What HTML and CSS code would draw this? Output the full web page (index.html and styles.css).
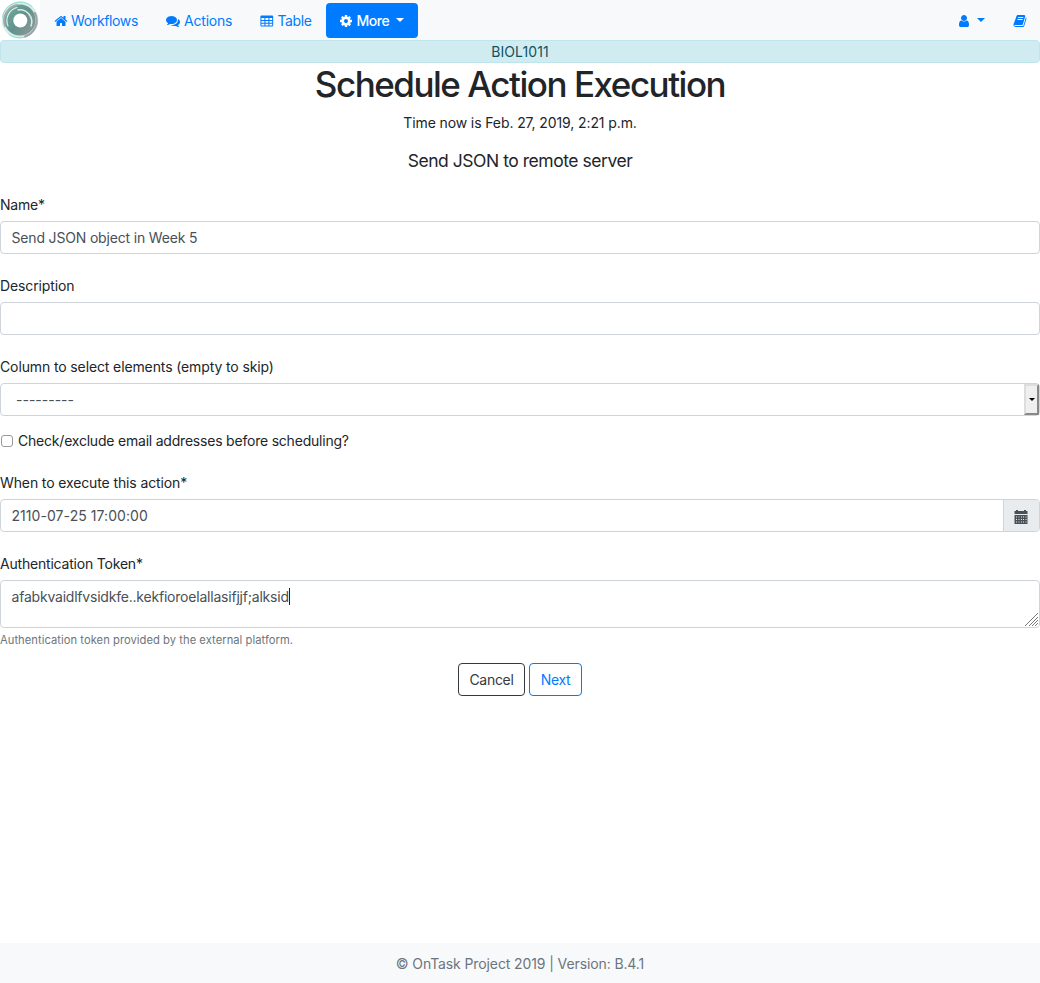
FILE: index.html
```html
<!DOCTYPE html>
<html lang="en">
<head>
<meta charset="utf-8">
<title>Schedule Action Execution</title>
<link rel="stylesheet" href="styles.css">
</head>
<body>
<nav class="navbar">
  <a class="brand">
    <svg width="40" height="40" viewBox="0 0 40 40">
      <defs>
        <linearGradient id="ring" x1="0" y1="0.1" x2="1" y2="0.9">
          <stop offset="0" stop-color="#6fae9f"/><stop offset=".5" stop-color="#62928c"/><stop offset="1" stop-color="#929a9b"/>
        </linearGradient>
      </defs>
      <rect width="40" height="40" fill="#fff"/>
      <circle cx="20" cy="20" r="18.400" fill="#d3efe9"/>
      <circle cx="20" cy="20" r="15.600" fill="url(#ring)"/>
      <g fill="none" stroke-linecap="round">
        <path d="M2.500 17A18 18 0 0 1 32 6.500" stroke="#8fdccb" stroke-width="1"/>
        <path d="M37.500 22A18 18 0 0 1 9 34.500" stroke="#83e3cd" stroke-width="1"/>
        <path d="M35 13A17 17 0 0 1 25 36.500" stroke="#a0a5a7" stroke-width="2"/>
        <path d="M5 26A16 16 0 0 1 17 5" stroke="#a3aaab" stroke-width="2"/>
        <path d="M8 26A13.500 13.500 0 0 1 17 7.500" stroke="#e0f0ec" stroke-width="1.200"/>
        <path d="M18 10A12 12 0 0 1 31 26" stroke="#d9eae7" stroke-width="1.500"/>
      </g>
      <circle cx="20.300" cy="20.500" r="7" fill="#fff"/>
    </svg>
  </a>
  <a class="nav-link workflows"><svg class="icon" viewBox="0 0 1792 1792"><path d="M1472 992v480q0 26-19 45t-45 19h-384v-384h-256v384h-384q-26 0-45-19t-19-45v-480q0-1 .5-3t.5-3l575-474 575 474q1 2 1 6zm223-69l-62 74q-8 9-21 11h-3q-13 0-21-7l-692-577-692 577q-12 8-24 7-13-2-21-11l-62-74q-8-10-7-23.5t11-21.5l719-599q32-26 76-26t76 26l244 204v-195q0-14 9-23t23-9h192q14 0 23 9t9 23v408l219 182q10 8 11 21.5t-7 23.5z"/></svg><span>Workflows</span></a>
  <a class="nav-link actions"><svg class="icon" viewBox="0 0 1792 1792"><path d="M1408 768q0 139-94 257t-256.5 186.5-353.5 68.5q-86 0-176-16-124 88-278 128-36 9-86 16h-3q-11 0-20.5-8t-11.5-21q-1-3-1-6.5t.5-6.5 2-6l2.5-5 3.5-5.500 4-5 4.500-5 4-4.500q5-6 23-25t26-29.500 22.500-29 25-38.500 20.500-44q-124-72-195-177t-71-224q0-139 94-257t256.500-186.500 353.500-68.500 353.500 68.500 256.500 186.500 94 257zm384 256q0 120-71 224.500t-195 176.500q10 24 20.500 44t25 38.500 22.500 29 26 29.500 23 25q1 1 4 4.500t4.500 5 4 5 3.500 5.500l2.500 5 2 6 .5 6.500-1 6.500q-3 14-13 22t-22 7q-50-7-86-16-154-40-278-128-90 16-176 16-271 0-472-132 58 4 88 4 161 0 309-45t264-129q125-92 192-212t67-254q0-77-23-152 129 71 204 178t75 230z"/></svg><span>Actions</span></a>
  <a class="nav-link table"><svg class="icon" viewBox="0 0 14 14"><path fill-rule="evenodd" d="M1.600 1.500H12A1.200 1.200 0 0 1 13.200 2.700V11.300A1.200 1.200 0 0 1 12 12.500H1.600A1.200 1.200 0 0 1 .4 11.300V2.700A1.200 1.200 0 0 1 1.600 1.500ZM1.400 4V6H4.400V4ZM5.400 4V6H8.400V4ZM9.400 4V6H12.200V4ZM1.400 7V8.800H4.400V7ZM5.400 7V8.800H8.400V7ZM9.400 7V8.800H12.200V7ZM1.400 9.800V11.600H4.400V9.800ZM5.400 9.800V11.600H8.400V9.800ZM9.400 9.800V11.600H12.200V9.800Z"/></svg><span>Table</span></a>
  <a class="nav-link more"><svg class="icon" viewBox="0 0 1792 1792"><path d="M1152 896q0-106-75-181t-181-75-181 75-75 181 75 181 181 75 181-75 75-181zm512-109v222q0 12-8 23t-20 13l-185 28q-19 54-39 91 35 50 107 138 10 12 10 25t-9 23q-27 37-99 108t-94 71q-12 0-26-9l-138-108q-44 23-91 38-16 136-29 186-7 28-36 28h-222q-14 0-24.5-8.5t-11.5-21.5l-28-184q-49-16-90-37l-141 107q-10 9-25 9-14 0-25-11-126-114-165-168-7-10-7-23 0-12 8-23 15-21 51-66.5t54-70.5q-27-50-41-99l-183-27q-13-2-21-12.5t-8-23.5v-222q0-12 8-23t19-13l186-28q14-46 39-92-40-57-107-138-10-12-10-24 0-10 9-23 26-36 98.5-107.5t94.5-71.5q13 0 26 10l138 107q44-23 91-38 16-136 29-186 7-28 36-28h222q14 0 24.5 8.5t11.5 21.5l28 184q49 16 90 37l142-107q9-9 24-9 13 0 25 10 129 119 165 170 7 8 7 22 0 12-8 23-15 21-51 66.5t-54 70.5q26 50 41 98l183 28q13 2 21 12.5t8 23.5z"/></svg><span>More</span><i class="caret"></i></a>
  <div class="nav-right">
    <a class="nav-link"><svg class="icon" viewBox="0 0 1792 1792"><path d="M1536 1399q0 109-62.5 187t-150.5 78h-854q-88 0-150.5-78t-62.500-187q0-85 8.500-160.500t31.500-152 58.500-131 94-89 134.500-34.500q131 128 313 128t313-128q76 0 134.500 34.500t94 89 58.500 131 31.500 152 8.500 160.500zm-256-887q0 159-112.500 271.500t-271.500 112.500-271.500-112.500-112.500-271.500 112.500-271.500 271.500-112.500 271.500 112.500 112.500 271.500z"/></svg><i class="caret"></i></a>
    <a class="nav-link"><svg class="icon" viewBox="0 0 1792 1792"><path d="M1703 478q40 57 18 129l-275 906q-19 64-76.5 107.5t-122.5 43.5h-923q-77 0-148.5-53.5t-99.5-131.5q-24-67-2-127 0-4 3-27t4-37q1-8-3-21.5t-3-19.5q2-11 8-21t16.5-23.5 16.5-23.5q23-38 45-91.5t30-91.5q3-10 .5-30t-.5-28q3-11 17-28t17-23q21-36 42-92t25-90q1-9-2.5-32t.5-28q4-13 22-30.5t22-22.5q19-26 42.5-84.5t27.5-96.5q1-8-3-25.5t-2-26.5q2-8 9-18t18-23 17-21q8-12 16.5-30.5t15-35 16-36 19.5-32 26.5-23.5 36-11.5 47.5 5.5l-1 3q38-9 51-9h761q74 0 114 56t18 130l-274 906q-36 119-71.5 153.5t-128.5 34.5h-869q-27 0-38 15-11 16-1 43 24 70 144 70h923q29 0 56-15.5t35-41.5l300-987q7-22 5-57 38 15 59 43zm-1064 2q-4 13 2 22.5t20 9.5h608q13 0 25.5-9.5t16.5-22.5l21-64q4-13-2-22.5t-20-9.5h-608q-13 0-25.5 9.5t-16.5 22.5zm-83 256q-4 13 2 22.5t20 9.5h608q13 0 25.5-9.5t16.5-22.5l21-64q4-13-2-22.5t-20-9.5h-608q-13 0-25.5 9.5t-16.5 22.5z"/></svg></a>
  </div>
</nav>
<div class="workflow-name"><span>BIOL1011</span></div>
<main>
  <header class="heading">
    <h1>Schedule Action Execution</h1>
    <p class="now">Time now is Feb. 27, 2019, 2:21 p.m.</p>
    <p class="lead">Send JSON to remote server</p>
  </header>
  <form>
    <div class="group">
      <label class="l-name">Name*</label>
      <div class="control"><span class="v-name">Send JSON object in Week 5</span></div>
    </div>
    <div class="group">
      <label>Description</label>
      <div class="control"></div>
    </div>
    <div class="group select-group">
      <label class="l-column">Column to select elements (empty to skip)</label>
      <div class="control select"><span class="dashes">---------</span><b class="arrow"><i></i></b></div>
    </div>
    <div class="check"><span class="box"></span><span class="l-check">Check/exclude email addresses before scheduling?</span></div>
    <div class="group">
      <label class="l-when">When to execute this action*</label>
      <div class="control date"><span class="v-date">2110-07-25 17:00:00</span>
        <span class="addon"><svg width="14" height="14" viewBox="0 0 14 14" fill="#495057"><path d="M.5 1H2V0H4V1H10V0H12V1H13.500V4H.5Z"/><path fill-rule="evenodd" d="M.5 5H13.500V14H.5ZM2 6.500V7.500H3V6.500ZM4.500 6.500V7.500H5.500V6.500ZM7 6.500V7.500H8V6.500ZM9 6.500V7.500H10V6.500ZM11.500 6.500V7.500H12.500V6.500ZM2 9V10H3V9ZM4.500 9V10H5.500V9ZM7 9V10H8V9ZM9 9V10H10V9ZM11.500 9V10H12.500V9ZM2 11.500V12.500H3V11.500ZM4.500 11.500V12.500H5.500V11.500ZM7 11.500V12.500H8V11.500ZM9 11.500V12.500H10V11.500ZM11.500 11.500V12.500H12.500V11.500Z"/></svg></span>
      </div>
    </div>
    <div class="group token">
      <label class="l-token">Authentication Token*</label>
      <div class="control area"><span class="v-token">afabkvaidlfvsidkfe..kekfioroelallasifjjf;alksid</span><i class="cursor"></i>
        <svg class="grip" width="13" height="13" viewBox="0 0 13 13" stroke="#777" stroke-width="1"><path d="M0 13L13 0M4 13L13 4M7 13L13 7M10 13L13 10"/></svg>
      </div>
      <small>Authentication token provided by the external platform.</small>
    </div>
    <div class="buttons"><a class="btn cancel">Cancel</a><a class="btn next">Next</a></div>
  </form>
</main>
<footer><span>© OnTask Project 2019 | Version: B.4.1</span></footer>
</body>
</html>
```
FILE: styles.css
```css
* { box-sizing: border-box; }
body {
  margin: 0;
  height: 983px;
  display: flex;
  flex-direction: column;
  overflow: hidden;
  font: 14px/21px Inter, "Liberation Sans", sans-serif;
  color: #212529;
  background: #fff;
}
p, h1 { margin: 0; }
i { font-style: normal; }
.navbar { height: 40px; display: flex; align-items: center; background: #f8f9fa; color: #007bff; }
.brand { height: 40px; width: 40px; }
.brand svg { display: block; }
.nav-link { display: flex; align-items: center; height: 35px; margin-top: 1px; padding: 0 14px; white-space: nowrap; }
.icon { width: 14px; height: 14px; margin-right: 4px; fill: currentColor; flex: none; }
.workflows { width: 112px; padding-left: 13.5px; letter-spacing: -.36px; }
.workflows .icon { margin-right: 3.5px; }
.actions { width: 94px; letter-spacing: -.2px; }
.table { width: 80px; letter-spacing: -.4px; }
.table .icon { margin-right: 3.5px; }
.more { width: 92px; padding: 0 13px; background: #007bff; color: #fff; border-radius: 4px; font-weight: 500; letter-spacing: -.45px; }
.more .icon { margin-right: 3.5px; }
.caret { border: 4px solid transparent; border-top-color: currentColor; border-bottom: 0; margin-left: 7px; margin-top: -2px; }
.nav-right { margin-left: auto; display: flex; }
.nav-right .icon { margin-right: 0; }
.nav-right .nav-link + .nav-link { padding-right: 13.5px; padding-left: 13.5px; }
.nav-right .caret { margin-left: 6px; }
.workflow-name { height: 23px; border: 1px solid #bee5eb; border-radius: 4px; background: #d1ecf1; color: #0c5460; text-align: center; line-height: 21px; letter-spacing: .1px; }
main { flex: 1; }
.heading { text-align: center; }
h1 { font-size: 35px; line-height: 42px; font-weight: 500; height: 49px; letter-spacing: -1.48px; }
.now { height: 36px; line-height: 22px; letter-spacing: -.11px; }
.lead { font-size: 17.5px; line-height: 26px; height: 46px; letter-spacing: -.46px; }
.group { height: 81px; }
label { display: block; height: 27px; letter-spacing: -.12px; }
.l-name, .l-token { letter-spacing: -.2px; }
.control { position: relative; display: flex; align-items: center; height: 33px; border: 1px solid #ced4da; border-radius: 4px; padding: 0 10.5px; color: #495057; background: #fff; }
.v-name { letter-spacing: -.17px; }
.v-date { letter-spacing: .06px; }
.v-token { letter-spacing: -.21px; }
.select { padding-left: 15px; }
.arrow { position: absolute; right: 0; top: 0; width: 15px; height: 31px; background: #efefef; border: 2px solid; border-color: #ddd #888 #888 #ddd; display: flex; align-items: center; justify-content: center; }
.arrow i { border: 3.5px solid transparent; border-top-color: #000; border-bottom: 0; }
.select-group { height: 74px; }
.check { display: flex; align-items: center; gap: 5px; height: 21px; margin-bottom: 21px; letter-spacing: -.21px; }
.box { width: 12px; height: 12px; margin-left: 1px; border: 1px solid #999; border-radius: 3px; }
.date { padding-right: 0; justify-content: space-between; }
.addon { width: 36px; height: 31px; background: #e9ecef; border-left: 1px solid #ced4da; border-radius: 0 3px 3px 0; display: flex; align-items: center; justify-content: center; padding: 2px 2px 0 0; }
.area { height: 48px; align-items: flex-start; padding-top: 5px; }
.cursor { width: 1px; height: 17px; background: #222; margin-top: 2px; }
.grip { position: absolute; right: 1px; bottom: 1px; }
.token { height: 110px; }
small { display: block; margin-top: 4px; font-size: 11.2px; line-height: 17px; letter-spacing: .04px; color: #6c757d; }
.buttons { display: flex; justify-content: center; gap: 4px; letter-spacing: -.3px; }
.btn { height: 33px; line-height: 32px; border: 1px solid; border-radius: 4px; text-align: center; }
.cancel { width: 67px; color: #343a40; }
.next { width: 53px; color: #007bff; }
footer { height: 40px; line-height: 41px; background: #f8f9fa; color: #6c757d; text-align: center; letter-spacing: -.11px; }
```
